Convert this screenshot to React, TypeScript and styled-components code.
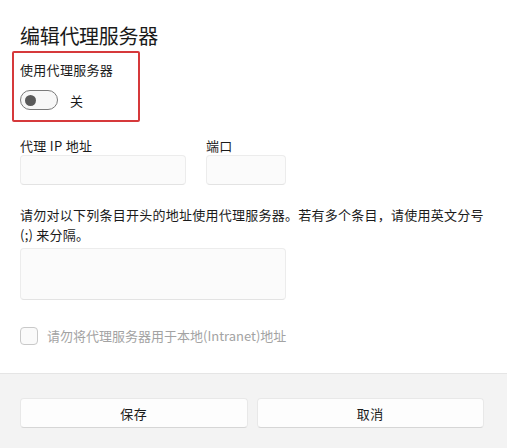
import styled, { createGlobalStyle } from 'styled-components';

const GlobalStyle = createGlobalStyle`
  html, body {
    margin: 0;
    padding: 0;
    background: #ffffff;
    height: 100%;
  }
  body {
    font-family: "Noto Sans CJK SC", "Noto Sans", "Liberation Sans", sans-serif;
    color: #1b1b1b;
  }
  #root {
    height: 100%;
  }
`;

const Dialog = styled.div`
  display: flex;
  flex-direction: column;
  height: 448px;
  width: 507px;
  overflow: hidden;
`;

const Body = styled.div`
  padding: 22px 20px 0 20px;
  display: flex;
  flex-direction: column;
  height: 373px;
  box-sizing: border-box;
`;

const Title = styled.h1`
  margin: 0;
  font-size: 20px;
  line-height: 28px;
  font-weight: 400;
  color: #1a1a1a;
  letter-spacing: -0.3px;
`;

const Highlight = styled.div`
  margin: 1px 0 0 -8px;
  width: 128px;
  height: 71px;
  box-sizing: border-box;
  border: 2px solid #d6393b;
  border-radius: 2px;
  padding: 8px 6px 0 6px;
  display: flex;
  flex-direction: column;
  gap: 11px;
`;

const Label = styled.div`
  font-size: 13px;
  line-height: 18px;
  letter-spacing: 0.3px;
`;

const ToggleRow = styled.div`
  display: flex;
  align-items: center;
  gap: 12px;
  font-size: 13px;
`;

const Toggle = styled.div`
  width: 38px;
  height: 20px;
  box-sizing: border-box;
  border: 1px solid #7a7a7a;
  border-radius: 10px;
  background: #f7f7f7;
  display: flex;
  align-items: center;
  padding-left: 4px;

  &::after {
    content: '';
    width: 11px;
    height: 11px;
    border-radius: 50%;
    background: #5a5a5a;
  }
`;

const FieldRow = styled.div`
  display: flex;
  gap: 20px;
  margin-top: 15px;
`;

const Field = styled.div`
  display: flex;
  flex-direction: column;
`;

const Input = styled.div<{ $w: number; $h: number }>`
  width: ${(p) => p.$w}px;
  height: ${(p) => p.$h}px;
  box-sizing: border-box;
  background: #fbfbfb;
  border: 1px solid #ececec;
  border-bottom-color: #e3e3e3;
  border-radius: 4px;
`;

const Description = styled.p`
  margin: 20px 0 0 0;
  max-width: 470px;
  font-size: 13px;
  line-height: 20px;
  letter-spacing: 0.25px;
`;

const ExclusionBox = styled.div`
  margin-top: 3px;
`;

const CheckRow = styled.label`
  display: flex;
  align-items: center;
  gap: 9px;
  margin-top: 27px;
  font-size: 13px;
  line-height: 18px;
  color: #a3a3a3;
`;

const CheckBox = styled.span`
  width: 18px;
  height: 18px;
  box-sizing: border-box;
  border: 1px solid #c9c9c9;
  border-radius: 4px;
  background: #fafafa;
`;

const Footer = styled.div`
  flex: 1;
  background: #f3f3f3;
  border-top: 1px solid #e5e5e5;
  padding: 24px 23px 0 20px;
  display: flex;
  gap: 9px;
  align-items: flex-start;
`;

const Button = styled.button`
  flex: 1;
  height: 30px;
  background: #fdfdfd;
  border: 1px solid #e8e8e8;
  border-bottom-color: #d6d6d6;
  border-radius: 4px;
  font-family: inherit;
  font-size: 13px;
  color: #1b1b1b;
  letter-spacing: 0.5px;
  padding: 0;
  cursor: pointer;
`;

export default function App() {
  return (
    <>
      <GlobalStyle />
      <Dialog>
        <Body>
          <Title>编辑代理服务器</Title>
          <Highlight>
            <Label>使用代理服务器</Label>
            <ToggleRow>
              <Toggle />
              <span>关</span>
            </ToggleRow>
          </Highlight>
          <FieldRow>
            <Field>
              <Label>代理 IP 地址</Label>
              <Input $w={166} $h={30} />
            </Field>
            <Field>
              <Label>端口</Label>
              <Input $w={80} $h={30} />
            </Field>
          </FieldRow>
          <Description>
            请勿对以下列条目开头的地址使用代理服务器。若有多个条目，请使用英文分号 (;) 来分隔。
          </Description>
          <ExclusionBox>
            <Input $w={266} $h={52} />
          </ExclusionBox>
          <CheckRow>
            <CheckBox />
            <span>请勿将代理服务器用于本地(Intranet)地址</span>
          </CheckRow>
        </Body>
        <Footer>
          <Button>保存</Button>
          <Button>取消</Button>
        </Footer>
      </Dialog>
    </>
  );
}
